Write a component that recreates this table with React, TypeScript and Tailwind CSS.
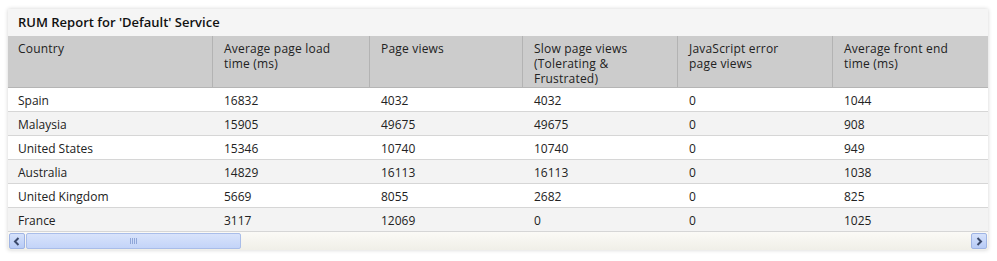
const columns = [
  { label: 'Country', width: 'w-[204px]' },
  { label: 'Average page load time (ms)', width: 'w-[157px]' },
  { label: 'Page views', width: 'w-[153px]' },
  { label: 'Slow page views (Tolerating & Frustrated)', width: 'w-[155px]' },
  { label: 'JavaScript error page views', width: 'w-[155px]' },
  { label: 'Average front end time (ms)', width: 'w-[156px]' },
];

const rows = [
  ['Spain', '16832', '4032', '4032', '0', '1044'],
  ['Malaysia', '15905', '49675', '49675', '0', '908'],
  ['United States', '15346', '10740', '10740', '0', '949'],
  ['Australia', '14829', '16113', '16113', '0', '1038'],
  ['United Kingdom', '5669', '8055', '2682', '0', '825'],
  ['France', '3117', '12069', '0', '0', '1025'],
];

function Arrow({ dir }: { dir: 'left' | 'right' }) {
  return (
    <div className="w-[16px] h-[16px] rounded-[2px] border border-[#9fb4e4] bg-gradient-to-b from-[#d6e2fb] to-[#b7cbf6] flex items-center justify-center">
      <svg width="8" height="9" viewBox="0 0 8 9">
        <path
          d={dir === 'left' ? 'M5.5 1 L2 4.5 L5.5 8' : 'M2.5 1 L6 4.5 L2.5 8'}
          stroke="#3b4a6b"
          strokeWidth="2"
          fill="none"
        />
      </svg>
    </div>
  );
}

export default function App() {
  return (
    <div className="w-[997px] h-[261px] bg-white pt-[9px] pl-[8px] font-['Open_Sans',sans-serif] text-[12px] text-[#222]">
      <div className="w-[980px] bg-white shadow-[0_0_4px_rgba(0,0,0,0.18)]">
        <div className="h-[27px] bg-[#f5f5f5] flex items-center pl-[10px] pt-[1px] text-[13px] font-semibold text-[#111]">
          RUM Report for 'Default' Service
        </div>

        <div className="overflow-hidden">
          <div className="flex bg-[#cccccc] h-[52px] border-b border-[#b5b5b5]">
            {columns.map((col, i) => (
              <div
                key={col.label}
                className={`${col.width} shrink-0 pt-[5px] leading-[15px] tracking-[0.2px] ${
                  i === 0 ? 'pl-[10px] pr-[40px]' : 'pl-[11px] pr-[35px] border-l border-[#b3b3b3]'
                }`}
              >
                {col.label}
              </div>
            ))}
          </div>

          {rows.map((row, r) => (
            <div
              key={row[0]}
              className={`flex h-[24px] items-center pt-[2px] border-b border-[#d6d6d6] ${
                r % 2 === 0 ? 'bg-white' : 'bg-[#f3f3f3]'
              }`}
            >
              {row.map((cell, i) => (
                <div
                  key={i}
                  className={`${columns[i].width} shrink-0 ${i === 0 ? 'pl-[10px]' : 'pl-[12px]'}`}
                >
                  {cell}
                </div>
              ))}
            </div>
          ))}
        </div>

        <div className="h-[18px] flex items-center bg-gradient-to-b from-[#fbfaf6] to-[#f0efe8] px-[1px]">
          <Arrow dir="left" />
          <div className="ml-[1px] w-[215px] h-[16px] rounded-[2px] border border-[#a9bde9] bg-gradient-to-b from-[#d8e3fb] to-[#c3d4f8] flex items-center justify-center">
            <div className="flex gap-[1px]">
              <span className="w-[1px] h-[6px] bg-[#8fa6d8]" />
              <span className="w-[1px] h-[6px] bg-[#8fa6d8]" />
              <span className="w-[1px] h-[6px] bg-[#8fa6d8]" />
              <span className="w-[1px] h-[6px] bg-[#8fa6d8]" />
            </div>
          </div>
          <div className="flex-1" />
          <Arrow dir="right" />
        </div>
      </div>
    </div>
  );
}
